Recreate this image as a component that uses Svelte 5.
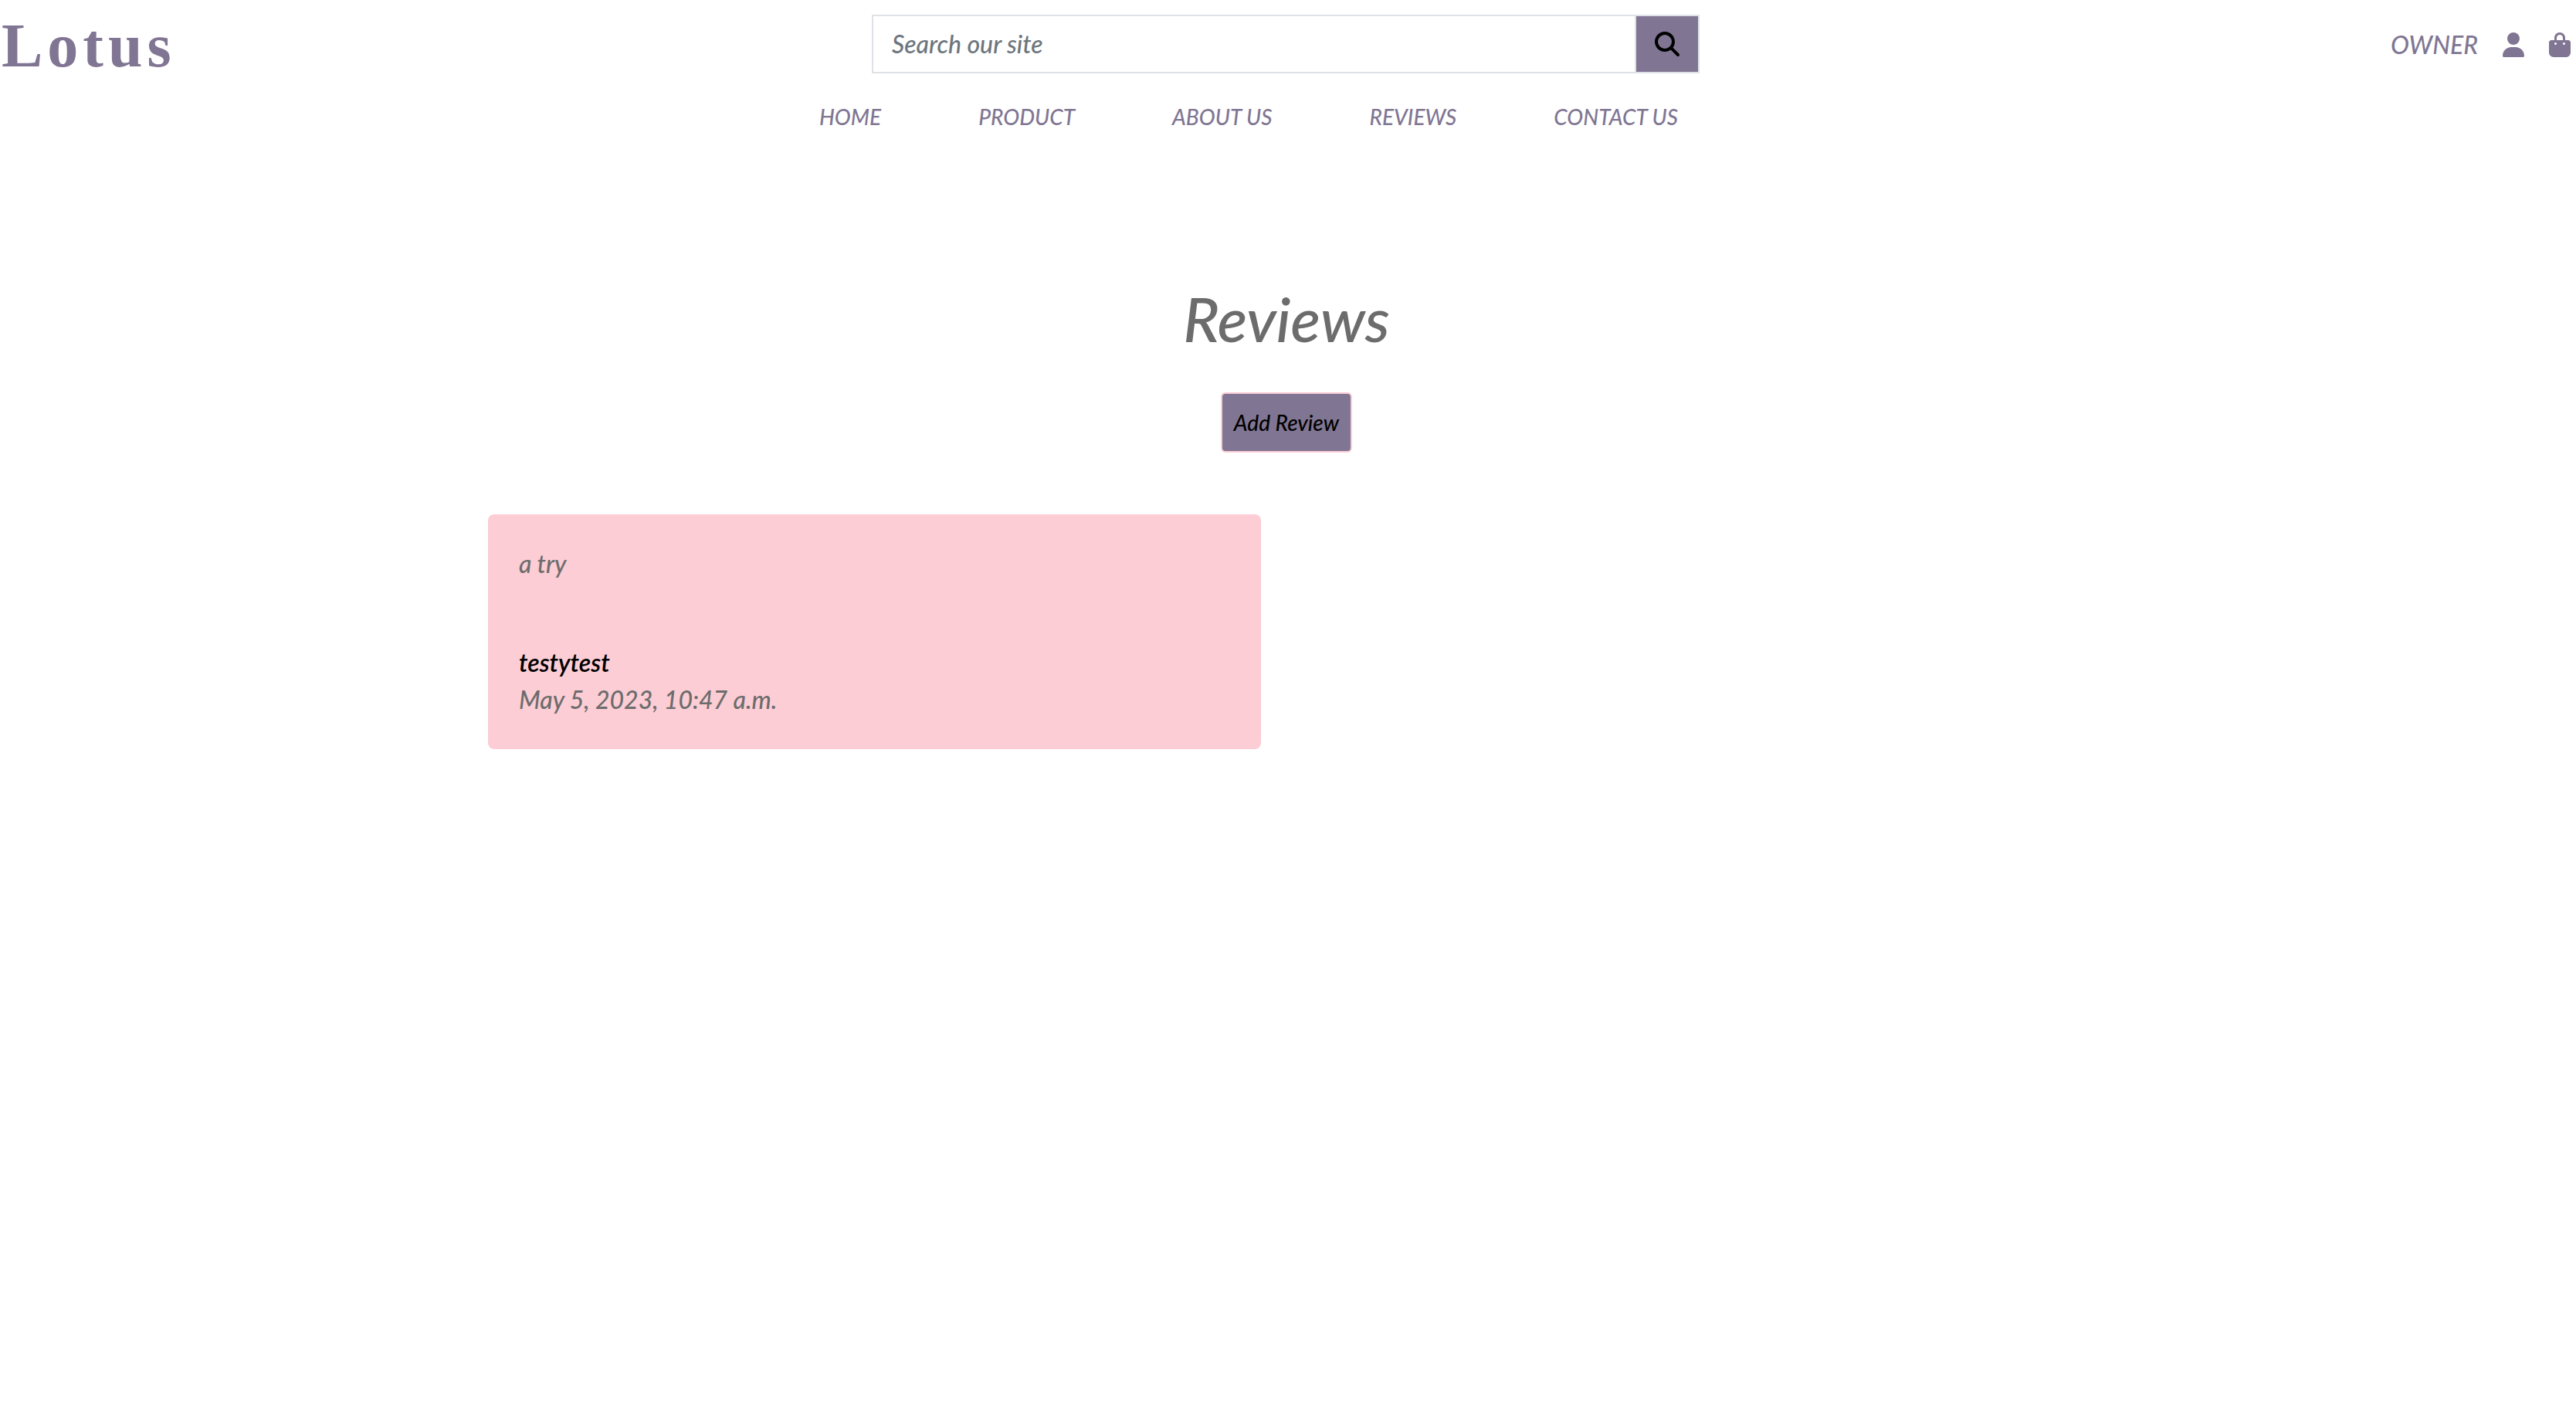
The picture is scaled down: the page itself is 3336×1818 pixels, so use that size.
<script>
  const links = ['Home', 'Product', 'About Us', 'Reviews', 'Contact Us'];
  const reviews = [
    { body: 'a try', author: 'testytest', date: 'May 5, 2023, 10:47 a.m.' }
  ];
  let query = $state('');
</script>

<header>
  <div class="top">
    <a class="logo" href="#home">Lotus</a>
    <form class="search" role="search" onsubmit={(e) => e.preventDefault()}>
      <input type="search" aria-label="Search our site" placeholder="Search our site" bind:value={query} />
      <button type="submit" aria-label="Search">
        <svg viewBox="0 0 512 512" width="32" height="32" aria-hidden="true">
          <path d="M416 208c0 45.9-14.9 88.3-40 122.7L502.6 457.4c12.5 12.5 12.5 32.8 0 45.3s-32.8 12.5-45.3 0L330.7 376c-34.4 25.2-76.8 40-122.7 40C93.1 416 0 322.9 0 208S93.1 0 208 0S416 93.1 416 208zM208 352a144 144 0 1 0 0-288 144 144 0 1 0 0 288z" />
        </svg>
      </button>
    </form>
    <div class="account">
      <a href="#owner">OWNER</a>
      <a href="#account" aria-label="Account">
        <svg viewBox="0 0 448 512" width="28" height="32" aria-hidden="true">
          <path d="M224 256A128 128 0 1 0 224 0a128 128 0 1 0 0 256zm-45.7 48C79.8 304 0 383.8 0 482.3C0 498.7 13.3 512 29.7 512H418.3c16.4 0 29.7-13.3 29.7-29.7C448 383.8 368.2 304 269.7 304H178.3z" />
        </svg>
      </a>
      <a href="#bag" aria-label="Shopping bag">
        <svg viewBox="0 0 448 512" width="28" height="32" aria-hidden="true">
          <path d="M160 112c0-35.3 28.7-64 64-64s64 28.7 64 64v48H160V112zm-48 48H48c-26.5 0-48 21.5-48 48V416c0 53 43 96 96 96H352c53 0 96-43 96-96V208c0-26.5-21.5-48-48-48H336V112C336 50.1 285.9 0 224 0S112 50.1 112 112v48zm24 48a24 24 0 1 1 0 48 24 24 0 1 1 0-48zm152 24a24 24 0 1 1 48 0 24 24 0 1 1 -48 0z" />
        </svg>
      </a>
    </div>
  </div>
  <nav aria-label="Main">
    {#each links as link}
      <a href="#{link.toLowerCase().replace(' ', '-')}">{link}</a>
    {/each}
  </nav>
</header>

<main>
  <h1>Reviews</h1>
  <button class="add" type="button">Add Review</button>
  <div class="reviews">
    {#each reviews as review}
      <article>
        <p>{review.body}</p>
        <footer>
          <strong>{review.author}</strong>
          <time>{review.date}</time>
        </footer>
      </article>
    {/each}
  </div>
</main>

<style>
  :global(body) {
    margin: 0;
    background: #fff;
    color: #6c6c6c;
    font: italic 500 32px/48px Lato, sans-serif;
  }
  a {
    color: #807693;
    text-decoration: none;
  }
  svg {
    display: block;
    fill: currentColor;
  }
  .top {
    display: grid;
    grid-template-columns: 1fr 1fr 1fr;
    align-items: center;
    height: 114px;
  }
  .logo {
    padding: 4px 0 0 2px;
    font: normal 700 80px/96px "Liberation Serif", serif;
    letter-spacing: 6px;
  }
  .search {
    display: flex;
    height: 76px;
    margin: 0 23px 0 17px;
  }
  .search input {
    flex: 1;
    min-width: 0;
    box-sizing: border-box;
    padding: 0 24px;
    border: 2px solid #dee2e6;
    border-right: 0;
    border-radius: 0;
    background: #fff;
    color: #495057;
    font: inherit;
    appearance: none;
    outline: 0;
  }
  .search input::placeholder {
    color: #6c757d;
    opacity: 1;
  }
  .search button {
    display: flex;
    align-items: center;
    padding: 0 24px;
    border: 2px solid #dee2e6;
    background: #807693;
    color: #000;
  }
  .account {
    display: flex;
    justify-content: flex-end;
    align-items: center;
    gap: 32px;
    padding: 2px 7px 0 0;
  }
  nav {
    display: flex;
    justify-content: center;
    gap: 126px;
    padding: 13px 102px 15px 0;
    font-size: 28px;
    text-transform: uppercase;
  }
  main {
    display: flex;
    flex-direction: column;
    align-items: center;
    padding: 174px 4px 0 0;
  }
  h1 {
    margin: 0 0 48px;
    font-size: 80px;
    line-height: 96px;
    font-weight: 500;
  }
  .add {
    height: 78px;
    padding: 0 15px;
    border: 2px solid #fccdd5;
    border-radius: 6px;
    background: #807693;
    color: #000;
    font: inherit;
    font-size: 28px;
  }
  .reviews {
    display: grid;
    grid-template-columns: 1fr 1fr;
    gap: 66px;
    box-sizing: border-box;
    width: 100%;
    max-width: 2068px;
    margin-top: 80px;
  }
  article {
    padding: 40px;
    border-radius: 8px;
    background: #fccdd5;
  }
  p {
    margin: 0 0 80px;
  }
  strong,
  time {
    display: block;
  }
  strong {
    color: #000;
    font-weight: 600;
  }
</style>
